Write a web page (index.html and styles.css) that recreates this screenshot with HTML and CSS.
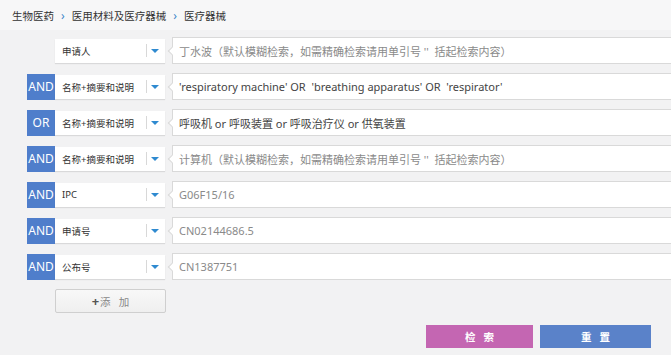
FILE: index.html
```html
<!DOCTYPE html>
<html>
<head>
    <title>检索</title>
    <link rel="stylesheet" href="styles.css">
</head>
<body>
    <div class="crumbs">
        <span>生物医药</span>
        <span class="sep">›</span>
        <span>医用材料及医疗器械</span>
        <span class="sep">›</span>
        <span>医疗器械</span>
    </div>

    <div class="form">
        <div class="row">
            <div class="logic empty"></div>
            <div class="field"><span class="field-text">申请人</span><span class="caret"></span></div>
            <div class="query placeholder">丁水波（默认模糊检索，如需精确检索请用单引号 ''  括起检索内容）</div>
        </div>
        <div class="row">
            <div class="logic">AND</div>
            <div class="field"><span class="field-text">名称+摘要和说明</span><span class="caret"></span></div>
            <div class="query">'respiratory machine' OR &nbsp;'breathing apparatus' OR &nbsp;'respirator'</div>
        </div>
        <div class="row">
            <div class="logic">OR</div>
            <div class="field"><span class="field-text">名称+摘要和说明</span><span class="caret"></span></div>
            <div class="query">呼吸机 or 呼吸装置 or 呼吸治疗仪 or 供氧装置</div>
        </div>
        <div class="row">
            <div class="logic">AND</div>
            <div class="field"><span class="field-text">名称+摘要和说明</span><span class="caret"></span></div>
            <div class="query placeholder">计算机（默认模糊检索，如需精确检索请用单引号 ''  括起检索内容）</div>
        </div>
        <div class="row">
            <div class="logic">AND</div>
            <div class="field"><span class="field-text">IPC</span><span class="caret"></span></div>
            <div class="query placeholder">G06F15/16</div>
        </div>
        <div class="row">
            <div class="logic">AND</div>
            <div class="field"><span class="field-text">申请号</span><span class="caret"></span></div>
            <div class="query placeholder">CN02144686.5</div>
        </div>
        <div class="row">
            <div class="logic">AND</div>
            <div class="field"><span class="field-text">公布号</span><span class="caret"></span></div>
            <div class="query placeholder">CN1387751</div>
        </div>

        <div class="add-row">
            <button class="add"><b>+</b>添&nbsp;&nbsp;&nbsp;加</button>
        </div>

        <div class="actions">
            <button class="btn search">检&nbsp;&nbsp;&nbsp;索</button>
            <button class="btn reset">重&nbsp;&nbsp;&nbsp;置</button>
        </div>
    </div>
</body>
</html>
```

FILE: styles.css
```css
body {
    margin: 0;
    background: #f2f2f3;
    font-family: "Noto Sans", "Noto Sans CJK SC", sans-serif;
    color: #333;
    overflow: hidden;
}
.crumbs {
    height: 30px;
    display: flex;
    align-items: center;
    gap: 6px;
    padding-left: 12px;
    background: #f7f7f8;
    font-size: 10.5px;
    color: #333;
}
.crumbs .sep {
    color: #3f86c8;
    font-size: 12px;
    padding: 0 1px;
}
.form {
    padding: 7px 20px 0 27px;
}
.row {
    display: flex;
    align-items: center;
    height: 27px;
    margin-bottom: 9px;
    margin-right: -30px;
}
.logic {
    width: 28px;
    height: 26px;
    background: #4f7ecb;
    color: #fff;
    font-size: 12px;
    display: flex;
    align-items: center;
    justify-content: center;
}
.logic.empty {
    background: none;
}
.field {
    width: 110px;
    height: 24px;
    background: #fff;
    box-shadow: 0 1px 1px rgba(0, 0, 0, 0.1);
    display: flex;
    align-items: center;
    position: relative;
}
.field-text {
    flex: 1;
    padding-left: 7px;
    font-size: 9.5px;
    color: #333;
}
.caret {
    width: 18px;
    height: 13px;
    border-left: 1px solid #d8d8d8;
    position: relative;
}
.caret::after {
    content: "";
    position: absolute;
    left: 4px;
    top: 5px;
    border-left: 4px solid transparent;
    border-right: 4px solid transparent;
    border-top: 4px solid #2f8ad0;
}
.query {
    flex: 1;
    margin-left: 7px;
    height: 25px;
    background: #fff;
    border: 1px solid #d9d9d9;
    padding-left: 6px;
    display: flex;
    align-items: center;
    font-size: 11px;
    color: #444;
    white-space: pre;
    position: relative;
}
.query::before {
    content: "";
    position: absolute;
    left: -4px;
    top: 10px;
    width: 5px;
    height: 5px;
    background: #fff;
    border-left: 1px solid #d9d9d9;
    border-bottom: 1px solid #d9d9d9;
    transform: rotate(45deg);
}
.query.placeholder {
    color: #8a8a8a;
}
.add-row {
    padding-left: 28px;
}
.add {
    width: 111px;
    height: 24px;
    border: 1px solid #cfcfcf;
    border-radius: 2px;
    background: linear-gradient(#f8f8f8, #efefef);
    font-family: inherit;
    font-size: 10.5px;
    color: #888;
    padding: 0;
}
.add b {
    color: #555;
    font-size: 13px;
    margin-right: 1px;
}
.actions {
    display: flex;
    justify-content: flex-end;
    gap: 7px;
    margin-top: 12px;
}
.btn {
    height: 23px;
    border: none;
    color: #fff;
    font-family: inherit;
    font-size: 10.5px;
    font-weight: bold;
    padding: 0;
}
.search {
    width: 107px;
    background: #c466b2;
}
.reset {
    width: 111px;
    background: #5a82c9;
}
```
